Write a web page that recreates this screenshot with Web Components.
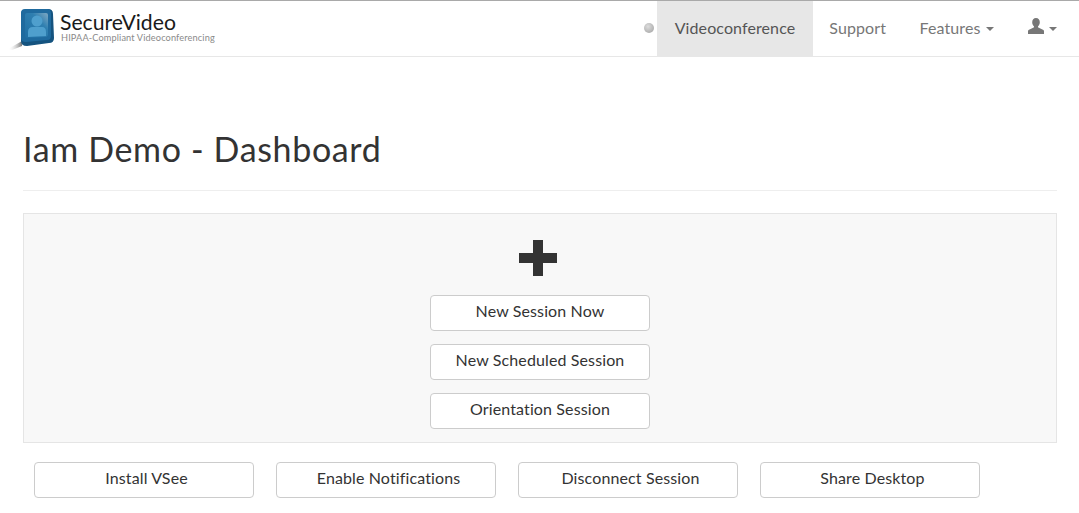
<!DOCTYPE html>
<html>
<head>
<meta charset="utf-8">
<title>SecureVideo Dashboard</title>
<style>
  html, body { margin: 0; background: #fff; }
  body { font-family: Lato, "Open Sans", sans-serif; color: #333; height: 513px; overflow: hidden; }
</style>
</head>
<body>
<sv-navbar></sv-navbar>
<sv-page-title>Iam Demo - Dashboard</sv-page-title>
<sv-panel>
  <sv-button>New Session Now</sv-button>
  <sv-button>New Scheduled Session</sv-button>
  <sv-button>Orientation Session</sv-button>
</sv-panel>
<sv-toolbar>
  <sv-button>Install VSee</sv-button>
  <sv-button>Enable Notifications</sv-button>
  <sv-button>Disconnect Session</sv-button>
  <sv-button>Share Desktop</sv-button>
</sv-toolbar>

<script>
class SvNavbar extends HTMLElement {
  constructor() {
    super();
    const shadow = this.attachShadow({ mode: "open" });
    shadow.innerHTML = `
      <style>
        :host { display: block; }
        .bar {
          display: flex;
          justify-content: space-between;
          height: 55px;
          border-top: 1px solid #a9a9a9;
          border-bottom: 1px solid #e7e7e7;
        }
        .brand { display: flex; align-items: flex-start; padding: 4px 0 0 8px; }
        .brand svg { display: block; }
        .brand-text { margin: 6px 0 0 0; }
        .name { font: 400 21.2px/22px Lato, sans-serif; color: #1a1a1a; }
        .tag { font: 400 9.2px/10px Lato, sans-serif; color: #8a8a8a; letter-spacing: .13px; margin-left: 1px; }
        .menu { display: flex; align-items: stretch; margin-right: 22px; }
        .dot {
          width: 10px; height: 10px; border-radius: 50%;
          background: radial-gradient(circle at 40% 35%, #ddd, #9f9f9f);
          align-self: center;
          margin: 0 3px 1px 0;
        }
        a {
          display: flex;
          align-items: center;
          padding: 0 16.5px 2px;
          font-size: 16px;
          color: #777;
          letter-spacing: .1px;
        }
        a.active { background: #e7e7e7; color: #555; padding: 0 18px 2px 17.5px; }
        a.support { padding: 0 17px 2px 16px; }
        .caret {
          width: 0; height: 0; margin-left: 5.5px; margin-top: 2px;
          border-top: 4px solid #777;
          border-left: 4px solid transparent;
          border-right: 4px solid transparent;
        }
        .user { padding: 0 0 2px 17px; }
        .user svg { display: block; margin-top: -3px; }
      </style>
      <div class="bar">
        <div class="brand">
          <svg width="52" height="47" viewBox="-2 0 52 47">
            <defs>
              <linearGradient id="screen" x1="0" y1="1" x2="1" y2="0">
                <stop offset="0" stop-color="#1f6ea3"/>
                <stop offset=".65" stop-color="#2f7fb0"/>
                <stop offset="1" stop-color="#7fa9c4"/>
              </linearGradient>
              <linearGradient id="shade" x1="0" y1="0" x2="1" y2="0">
                <stop offset="0" stop-color="#fff" stop-opacity="0"/>
                <stop offset="1" stop-color="#777"/>
              </linearGradient>
            </defs>
            <path d="M-2 44 L12 36 V41 L2 45 Z" fill="url(#shade)"/>
            <path d="M11 9 Q11 5 15 5 L38 4 Q43 4 43 9 L44 33 Q44 38 39 38 L17 41 Q11 41 11 36 Z" fill="#15537f"/>
            <path d="M11 8 Q11 4 15 4 L37 4 Q41 4 41 8 L41 31 Q41 35 37 35 L16 37 Q11 37 11 33 Z" fill="#1f6a9e"/>
            <path d="M15 10 Q15 8 17 8 L36 8 Q38 8 38 10 L38 29 Q38 32 35 32 L17 33 Q15 33 15 31 Z" fill="url(#screen)"/>
            <circle cx="27" cy="16" r="5.500" fill="#4f9fcd"/>
            <path d="M18 32 V27 Q18 22 23 22 H32 Q36 22 36 27 V31 Z" fill="#4f9fcd"/>
          </svg>
          <div class="brand-text">
            <div class="name">SecureVideo</div>
            <div class="tag">HIPAA-Compliant Videoconferencing</div>
          </div>
        </div>
        <nav class="menu">
          <span class="dot"></span>
          <a class="active">Videoconference</a>
          <a class="support">Support</a>
          <a>Features<span class="caret"></span></a>
          <a class="user">
            <svg width="16" height="16" viewBox="0 0 16 16"><path fill="#777" d="M8 0c2.4 0 3.8 1.8 3.8 4.2 0 1.700-.7 3.200-1.700 4.100-.3.3-.2 1 .2 1.300L15 11.800c.6.300 1 .8 1 1.500V16H0v-2.700c0-.7.400-1.200 1-1.500l4.700-2.200c.4-.3.500-1 .2-1.300-1-.9-1.700-2.400-1.700-4.100C4.200 1.800 5.600 0 8 0z"/></svg>
            <span class="caret"></span>
          </a>
        </nav>
      </div>
    `;
  }
}

class SvPageTitle extends HTMLElement {
  constructor() {
    super();
    const shadow = this.attachShadow({ mode: "open" });
    shadow.innerHTML = `
      <style>
        :host { display: block; margin: 0 22px 22px 23px; }
        h1 {
          margin: 0;
          padding: 72px 0 21px;
          height: 40px;
          font: 400 34px/40px Lato, sans-serif;
          color: #333;
          letter-spacing: .65px;
          border-bottom: 1px solid #eee;
        }
      </style>
      <h1><slot></slot></h1>
    `;
  }
}

class SvPanel extends HTMLElement {
  constructor() {
    super();
    const shadow = this.attachShadow({ mode: "open" });
    shadow.innerHTML = `
      <style>
        :host {
          display: flex;
          flex-direction: column;
          align-items: center;
          box-sizing: border-box;
          height: 230px;
          margin: 0 22px 19px 23px;
          padding-top: 26px;
          background: #f8f8f8;
          border: 1px solid #e5e5e5;
        }
        svg { display: block; margin: 0 4px 19px 0; }
        .stack { display: flex; flex-direction: column; gap: 13px; }
      </style>
      <svg width="38" height="36" viewBox="0 0 38 36"><path fill="#333" d="M14 0h10v13h14v10H24v13H14V23H0V13h14z"/></svg>
      <div class="stack"><slot></slot></div>
    `;
  }
}

class SvToolbar extends HTMLElement {
  constructor() {
    super();
    const shadow = this.attachShadow({ mode: "open" });
    shadow.innerHTML = `
      <style>
        :host { display: flex; gap: 22px; padding-left: 34px; --btn-shift: 5px; }
      </style>
      <slot></slot>
    `;
  }
}

class SvButton extends HTMLElement {
  constructor() {
    super();
    const shadow = this.attachShadow({ mode: "open" });
    shadow.innerHTML = `
      <style>
        :host { display: block; }
        button {
          display: block;
          box-sizing: border-box;
          width: 220px;
          height: 36px;
          padding: 0 0 5px var(--btn-shift, 0);
          background: #fff;
          border: 1px solid #ccc;
          border-radius: 4px;
          font: 400 16px/22px Lato, sans-serif;
          letter-spacing: .12px;
          color: #333;
        }
      </style>
      <button type="button"><slot></slot></button>
    `;
  }
}

customElements.define("sv-navbar", SvNavbar);
customElements.define("sv-page-title", SvPageTitle);
customElements.define("sv-panel", SvPanel);
customElements.define("sv-toolbar", SvToolbar);
customElements.define("sv-button", SvButton);
</script>
</body>
</html>
